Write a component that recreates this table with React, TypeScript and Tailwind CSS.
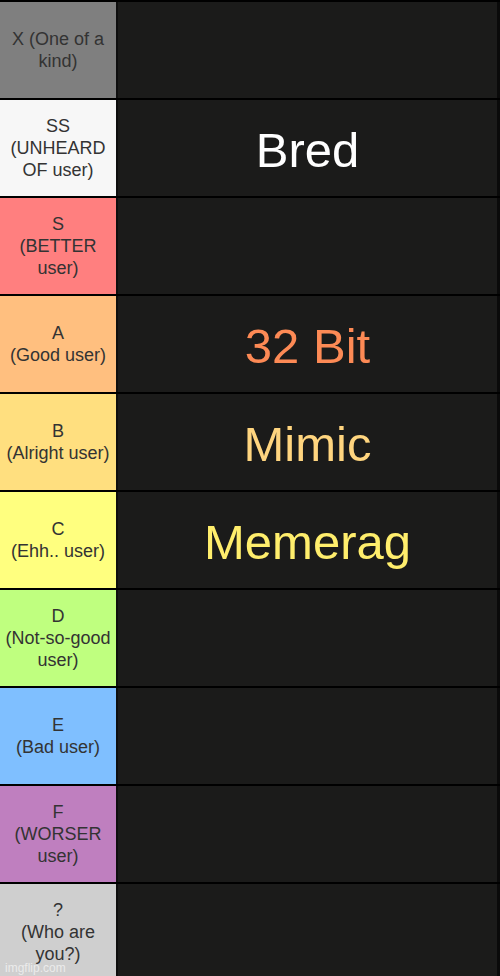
const tiers = [
  { label: ["X (One of a", "kind)"], bg: "bg-[#7f7f7f]", text: "", color: "" },
  { label: ["SS", "(UNHEARD", "OF user)"], bg: "bg-[#f7f7f7]", text: "Bred", color: "text-white" },
  { label: ["S", "(BETTER", "user)"], bg: "bg-[#ff7f7f]", text: "", color: "" },
  { label: ["A", "(Good user)"], bg: "bg-[#ffbf7f]", text: "32 Bit", color: "text-[#fd8a55]" },
  { label: ["B", "(Alright user)"], bg: "bg-[#ffdf7f]", text: "Mimic", color: "text-[#ffd57f]" },
  { label: ["C", "(Ehh.. user)"], bg: "bg-[#ffff7f]", text: "Memerag", color: "text-[#ffee6c]" },
  { label: ["D", "(Not-so-good", "user)"], bg: "bg-[#bfff7f]", text: "", color: "" },
  { label: ["E", "(Bad user)"], bg: "bg-[#7fbfff]", text: "", color: "" },
  { label: ["F", "(WORSER", "user)"], bg: "bg-[#bf7fbf]", text: "", color: "" },
  { label: ["?", "(Who are", "you?)"], bg: "bg-[#cfcfcf]", text: "", color: "" },
];

export default function App() {
  return (
    <div className="relative w-[500px] h-[976px] overflow-hidden bg-black pt-[2px] font-['Liberation_Sans',Arial,sans-serif]">
      {tiers.map((t, i) => (
        <div key={i} className="flex h-[98px] border-b-2 border-black">
          <div
            className={`w-[116px] shrink-0 flex flex-col items-center justify-center text-center text-[18px] leading-[22px] text-[#333333] ${t.bg}`}
          >
            {t.label.map((line, j) => (
              <span key={j} className="whitespace-nowrap">
                {line}
              </span>
            ))}
          </div>
          <div className="w-[2px] bg-[#0e0e0e]" />
          <div className="flex-1 flex items-center justify-center bg-[#1b1b1a]">
            {t.text && (
              <span className={`text-[49px] leading-none mt-[4px] ${t.color}`}>{t.text}</span>
            )}
          </div>
          <div className="w-[3px] bg-[#0a0a0a]" />
        </div>
      ))}
      <span className="absolute left-[5px] bottom-[2px] text-[12px] leading-none text-white/60">
        imgflip.com
      </span>
    </div>
  );
}
